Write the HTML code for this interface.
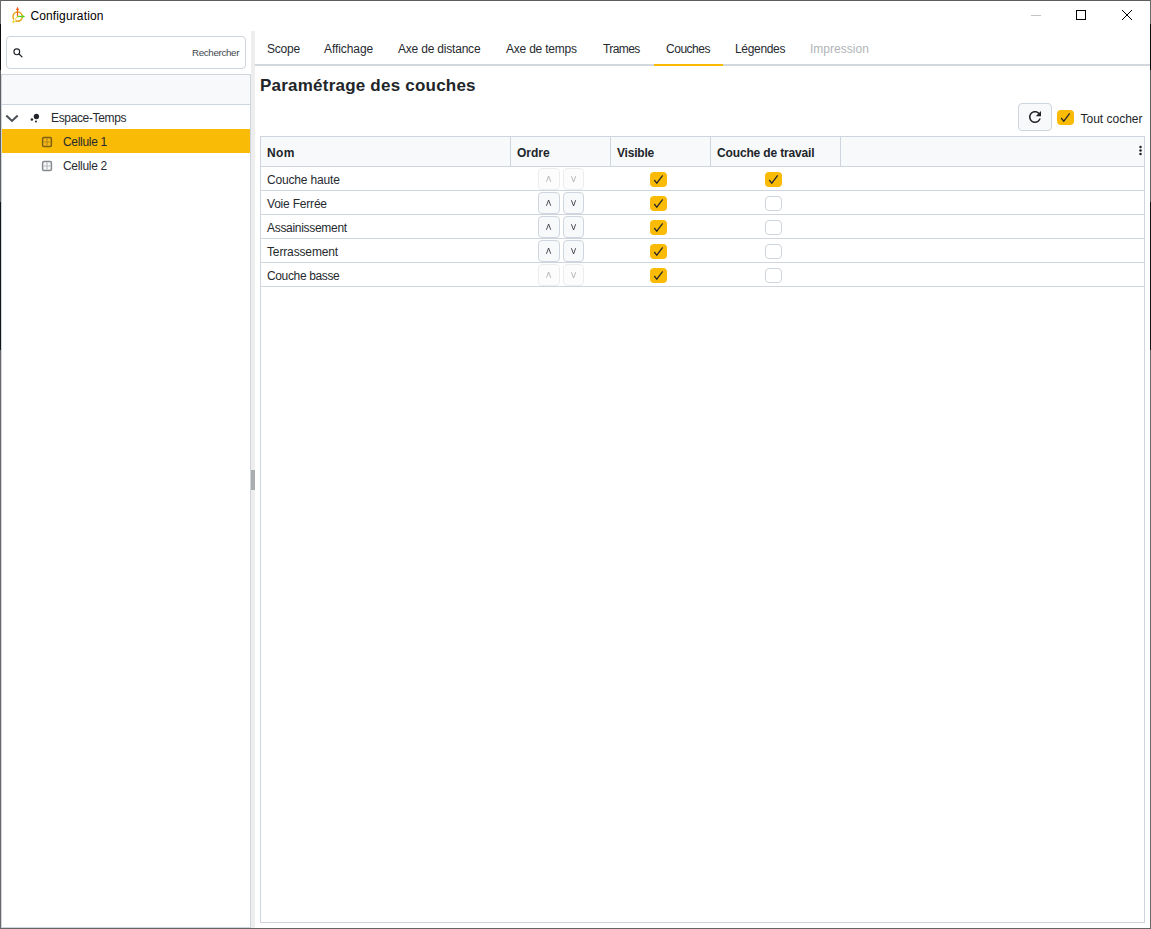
<!DOCTYPE html>
<html lang="fr">
<head>
<meta charset="utf-8">
<title>Configuration</title>
<style>
html,body{margin:0;padding:0;}
body{width:1151px;height:929px;overflow:hidden;background:#fff;font-family:"Liberation Sans",sans-serif;color:#212529;}
#win{position:absolute;left:0;top:0;width:1149px;height:927px;border:1px solid #666;border-top-color:#5d5f5e;background:#fff;overflow:hidden;}
.abs{position:absolute;}
.t{position:absolute;white-space:nowrap;line-height:1;}
/* title bar */
#title{left:29.4px;top:9px;font-size:12px;color:#000;letter-spacing:.14px;}
/* left panel */
#search{left:5px;top:35px;width:238px;height:31px;border:1px solid #cfd5de;border-radius:4px;background:#fff;}
#tree{left:0;top:73px;width:248px;height:852px;border:1px solid #cfd5de;background:#fff;}
#treehead{left:0;top:0;width:248px;height:29px;background:#f8f9fa;border-bottom:1px solid #cfd5de;}
#sel{left:0px;top:54px;width:248px;height:24px;background:#fabb07;}
#split{left:250px;top:30px;width:4px;height:897px;background:#eee;}
#grip{left:250px;top:469px;width:4px;height:20px;background:#a8adb0;}
/* tabs */
#tabline{left:254px;top:63px;width:895px;height:2px;background:#d3d8df;}
#tabsel{left:653px;top:63px;width:69px;height:2px;background:#fabb07;}
.tab{font-size:12px;top:42px;color:#262a2f;}
/* heading */
#h1{left:259px;top:76px;font-size:17px;font-weight:700;color:#212529;letter-spacing:.22px;}
/* toolbar */
#refresh{left:1017px;top:102px;width:32px;height:26px;border:1px solid #cfd5de;border-radius:4px;background:#f8f9fa;}
.cb{position:absolute;width:17px;height:15px;border-radius:4px;background:#fabb07;}
.cb.off{width:15px;height:13px;background:#fff;border:1px solid #cfd5de;}
.cb svg{position:absolute;left:0;top:0;}
/* table */
#table{left:259px;top:135px;width:883px;height:785px;border:1px solid #cfd5de;background:#fff;}
#thead{left:0;top:0;width:883px;height:29px;background:#f8f9fa;border-bottom:1px solid #cfd5de;}
.vd{position:absolute;top:0;width:1px;height:29px;background:#cfd5de;}
.hl{position:absolute;left:0;width:883px;height:1px;background:#cfd5de;}
.th{font-size:12px;font-weight:700;top:10px;}
.td{font-size:12px;color:#262a2f;}
.ob{position:absolute;width:20px;height:20px;border:1px solid #cfd5de;border-radius:4px;background:#f8f9fa;}
.ob.dis{opacity:.4;}
.ob svg{position:absolute;left:0;top:0;}
.edge{position:absolute;top:0;width:1px;height:929px;background:linear-gradient(to bottom,#6b6b6b 0,#6b6b6b 24px,#0c0c0c 24px,#0c0c0c 70px,#606060 70px,#606060 202px,#161616 202px,#161616 350px,#6c6a68 350px,#6c6a68 929px);}
</style>
</head>
<body>
<div id="win">
  <!-- title bar -->
  <svg class="abs" style="left:10px;top:5px" width="18" height="18" viewBox="0 0 18 18">
    <circle cx="6.6" cy="10.6" r="4.6" fill="none" stroke="#e3a51c" stroke-width="1.5"/>
    <line x1="6.5" y1="10.5" x2="6.5" y2="3" stroke="#f0641e" stroke-width="1.3"/>
    <path d="M4.9 4 L6.5 0.8 L8.1 4 Z" fill="#f0641e"/>
    <line x1="6.6" y1="10.5" x2="12" y2="10.5" stroke="#55d41c" stroke-width="1.3"/>
    <path d="M11.4 8.9 L14.2 10.5 L11.4 12.1 Z" fill="#55d41c"/>
    <line x1="5.6" y1="11.8" x2="2.6" y2="15.6" stroke="#fff" stroke-width="2.2"/><line x1="6.2" y1="11" x2="3.6" y2="14.3" stroke="#ecd93a" stroke-width="1.3" stroke-dasharray="1.3 0.9"/><line x1="3.4" y1="14.6" x2="1.7" y2="16.7" stroke="#e6d426" stroke-width="1.7"/>
  </svg>
  <div class="t" id="title">Configuration</div>
  <svg class="abs" style="left:1025px;top:5px" width="115" height="20" viewBox="0 0 115 20">
    <line x1="5" y1="9.5" x2="15" y2="9.5" stroke="#c4c4c4" stroke-width="1"/>
    <rect x="50.5" y="4.5" width="9" height="9" fill="none" stroke="#000" stroke-width="1"/>
    <path d="M96 4 L106 14 M106 4 L96 14" stroke="#000" stroke-width="1" fill="none"/>
  </svg>

  <!-- left panel -->
  <div class="abs" id="search">
    <svg class="abs" style="left:5px;top:10px" width="12" height="12" viewBox="0 0 12 12">
      <circle cx="4.8" cy="4.8" r="2.9" fill="none" stroke="#212529" stroke-width="1.15"/>
      <line x1="7" y1="7" x2="10" y2="9.9" stroke="#212529" stroke-width="1.3" stroke-linecap="round"/>
    </svg>
    <div class="t" style="left:185px;top:11px;font-size:9.8px;color:#41474d;letter-spacing:-.36px">Rechercher</div>
  </div>
  <div class="abs" id="tree">
    <div class="abs" id="treehead"></div>
    <div class="abs" id="sel"></div>
    <!-- chevron -->
    <svg class="abs" style="left:2px;top:37px" width="16" height="12" viewBox="0 0 16 12">
      <path d="M2.3 3.4 L8 8.9 L13.7 3.4" fill="none" stroke="#495057" stroke-width="2.1"/>
    </svg>
    <!-- dots icon -->
    <svg class="abs" style="left:27px;top:37px" width="12" height="12" viewBox="0 0 12 12">
      <circle cx="7.4" cy="4.5" r="2.65" fill="#212529"/>
      <circle cx="2.9" cy="7.4" r="1.25" fill="#212529"/>
      <circle cx="7" cy="9.4" r="1" fill="#212529"/>
    </svg>
    <div class="t td" style="left:49px;top:37px;letter-spacing:-.35px">Espace-Temps</div>
    <!-- cell icons -->
    <svg class="abs" style="left:39px;top:61px" width="12" height="12" viewBox="0 0 12 12">
      <rect x="1.6" y="1.6" width="8.8" height="8.8" rx="1.2" fill="#f5b81c" stroke="#7d5f10" stroke-width="1.5"/>
      <path d="M6 2.2 V9.8 M2.2 6 H9.8" stroke="#b98a10" stroke-width="1.2"/>
    </svg>
    <div class="t td" style="left:61px;top:61px;letter-spacing:-.3px">Cellule 1</div>
    <svg class="abs" style="left:39px;top:85px" width="12" height="12" viewBox="0 0 12 12">
      <rect x="1.6" y="1.6" width="8.8" height="8.8" rx="1.2" fill="#f6f7f8" stroke="#86898d" stroke-width="1.5"/>
      <path d="M6 2.2 V9.8 M2.2 6 H9.8" stroke="#b9bcc0" stroke-width="1.2"/>
    </svg>
    <div class="t td" style="left:61px;top:85px;letter-spacing:-.3px">Cellule 2</div>
  </div>
  <div class="abs" id="split"></div>
  <div class="abs" id="grip"></div>

  <!-- tabs -->
  <div class="abs" id="tabline"></div>
  <div class="abs" id="tabsel"></div>
  <div class="t tab" style="left:266px;letter-spacing:-0.2px">Scope</div>
  <div class="t tab" style="left:323px;letter-spacing:-0.08px">Affichage</div>
  <div class="t tab" style="left:397px;letter-spacing:-0.2px">Axe de distance</div>
  <div class="t tab" style="left:505px;letter-spacing:-0.22px">Axe de temps</div>
  <div class="t tab" style="left:602px;letter-spacing:-0.58px">Trames</div>
  <div class="t tab" style="left:665px;letter-spacing:-0.48px">Couches</div>
  <div class="t tab" style="left:734px;letter-spacing:-0.33px">Légendes</div>
  <div class="t tab" style="left:809px;letter-spacing:0.02px;color:#b0b4b8">Impression</div>

  <div class="t" id="h1">Paramétrage des couches</div>

  <!-- toolbar -->
  <div class="abs" id="refresh">
    <svg class="abs" style="left:6.8px;top:4.1px" width="18" height="18" viewBox="0 0 24 24">
      <path fill="#212529" d="M17.65 6.35C16.2 4.9 14.21 4 12 4c-4.42 0-7.99 3.58-7.99 8s3.57 8 7.99 8c3.73 0 6.84-2.55 7.73-6h-2.08c-.82 2.33-3.04 4-5.65 4-3.31 0-6-2.69-6-6s2.69-6 6-6c1.66 0 3.14.69 4.22 1.78L13 11h7V4l-2.35 2.35z"/>
    </svg>
  </div>
  <div class="cb" style="left:1056px;top:109px"><svg width="17" height="15" viewBox="0 0 17 15"><path d="M4.2 8 L6.8 11.2 L12.7 3.3" fill="none" stroke="#212529" stroke-width="1.2"/></svg></div>
  <div class="t" style="left:1079.5px;top:112px;font-size:12px;letter-spacing:0px">Tout cocher</div>

  <!-- table -->
  <div class="abs" id="table">
    <div class="abs" id="thead">
      <div class="vd" style="left:249px"></div>
      <div class="vd" style="left:349px"></div>
      <div class="vd" style="left:449px"></div>
      <div class="vd" style="left:579px"></div>
      <div class="t th" style="left:6px;letter-spacing:.4px">Nom</div>
      <div class="t th" style="left:256px">Ordre</div>
      <div class="t th" style="left:356px;letter-spacing:-.2px">Visible</div>
      <div class="t th" style="left:456px;letter-spacing:-.15px">Couche de travail</div>
      <svg class="abs" style="left:877px;top:8px" width="5" height="12" viewBox="0 0 5 12"><circle cx="2.5" cy="2" r="1.25" fill="#212529"/><circle cx="2.5" cy="5.5" r="1.25" fill="#212529"/><circle cx="2.5" cy="9" r="1.25" fill="#212529"/></svg>
    </div>
    <div class="hl" style="top:53px"></div>
    <div class="hl" style="top:77px"></div>
    <div class="hl" style="top:101px"></div>
    <div class="hl" style="top:125px"></div>
    <div class="hl" style="top:149px"></div>
    <!-- ROWS-START -->
    <div class="t td" style="left:6px;top:37px;letter-spacing:-0.17px">Couche haute</div>
    <div class="ob dis" style="left:277px;top:31px"><svg width="20" height="20" viewBox="0 0 20 20"><path d="M7.45 12.8 L9.6 7 L11.75 12.8" fill="none" stroke="#343a40" stroke-width="0.88"/></svg></div>
    <div class="ob dis" style="left:302px;top:31px;width:19px"><svg width="20" height="20" viewBox="0 0 20 20"><path d="M7.4 7.2 L9.55 13 L11.7 7.2" fill="none" stroke="#343a40" stroke-width="0.88"/></svg></div>
    <div class="cb" style="left:389px;top:35px"><svg width="17" height="15" viewBox="0 0 17 15"><path d="M4.2 8 L6.8 11.2 L12.7 3.3" fill="none" stroke="#212529" stroke-width="1.2"/></svg></div>
    <div class="cb" style="left:504px;top:35px"><svg width="17" height="15" viewBox="0 0 17 15"><path d="M4.2 8 L6.8 11.2 L12.7 3.3" fill="none" stroke="#212529" stroke-width="1.2"/></svg></div>
    <div class="t td" style="left:6px;top:61px;letter-spacing:-0.2px">Voie Ferrée</div>
    <div class="ob" style="left:277px;top:55px"><svg width="20" height="20" viewBox="0 0 20 20"><path d="M7.45 12.8 L9.6 7 L11.75 12.8" fill="none" stroke="#343a40" stroke-width="0.88"/></svg></div>
    <div class="ob" style="left:302px;top:55px;width:19px"><svg width="20" height="20" viewBox="0 0 20 20"><path d="M7.4 7.2 L9.55 13 L11.7 7.2" fill="none" stroke="#343a40" stroke-width="0.88"/></svg></div>
    <div class="cb" style="left:389px;top:59px"><svg width="17" height="15" viewBox="0 0 17 15"><path d="M4.2 8 L6.8 11.2 L12.7 3.3" fill="none" stroke="#212529" stroke-width="1.2"/></svg></div>
    <div class="cb off" style="left:504px;top:59px"></div>
    <div class="t td" style="left:6px;top:85px;letter-spacing:-0.3px">Assainissement</div>
    <div class="ob" style="left:277px;top:79px"><svg width="20" height="20" viewBox="0 0 20 20"><path d="M7.45 12.8 L9.6 7 L11.75 12.8" fill="none" stroke="#343a40" stroke-width="0.88"/></svg></div>
    <div class="ob" style="left:302px;top:79px;width:19px"><svg width="20" height="20" viewBox="0 0 20 20"><path d="M7.4 7.2 L9.55 13 L11.7 7.2" fill="none" stroke="#343a40" stroke-width="0.88"/></svg></div>
    <div class="cb" style="left:389px;top:83px"><svg width="17" height="15" viewBox="0 0 17 15"><path d="M4.2 8 L6.8 11.2 L12.7 3.3" fill="none" stroke="#212529" stroke-width="1.2"/></svg></div>
    <div class="cb off" style="left:504px;top:83px"></div>
    <div class="t td" style="left:6px;top:109px;letter-spacing:-0.14px">Terrassement</div>
    <div class="ob" style="left:277px;top:103px"><svg width="20" height="20" viewBox="0 0 20 20"><path d="M7.45 12.8 L9.6 7 L11.75 12.8" fill="none" stroke="#343a40" stroke-width="0.88"/></svg></div>
    <div class="ob" style="left:302px;top:103px;width:19px"><svg width="20" height="20" viewBox="0 0 20 20"><path d="M7.4 7.2 L9.55 13 L11.7 7.2" fill="none" stroke="#343a40" stroke-width="0.88"/></svg></div>
    <div class="cb" style="left:389px;top:107px"><svg width="17" height="15" viewBox="0 0 17 15"><path d="M4.2 8 L6.8 11.2 L12.7 3.3" fill="none" stroke="#212529" stroke-width="1.2"/></svg></div>
    <div class="cb off" style="left:504px;top:107px"></div>
    <div class="t td" style="left:6px;top:133px;letter-spacing:-0.36px">Couche basse</div>
    <div class="ob dis" style="left:277px;top:127px"><svg width="20" height="20" viewBox="0 0 20 20"><path d="M7.45 12.8 L9.6 7 L11.75 12.8" fill="none" stroke="#343a40" stroke-width="0.88"/></svg></div>
    <div class="ob dis" style="left:302px;top:127px;width:19px"><svg width="20" height="20" viewBox="0 0 20 20"><path d="M7.4 7.2 L9.55 13 L11.7 7.2" fill="none" stroke="#343a40" stroke-width="0.88"/></svg></div>
    <div class="cb" style="left:389px;top:131px"><svg width="17" height="15" viewBox="0 0 17 15"><path d="M4.2 8 L6.8 11.2 L12.7 3.3" fill="none" stroke="#212529" stroke-width="1.2"/></svg></div>
    <div class="cb off" style="left:504px;top:131px"></div>
    <!-- ROWS-END -->
  </div>
</div>
<div class="edge" style="left:0"></div>
<div class="edge" style="left:1150px"></div>
</body>
</html>
